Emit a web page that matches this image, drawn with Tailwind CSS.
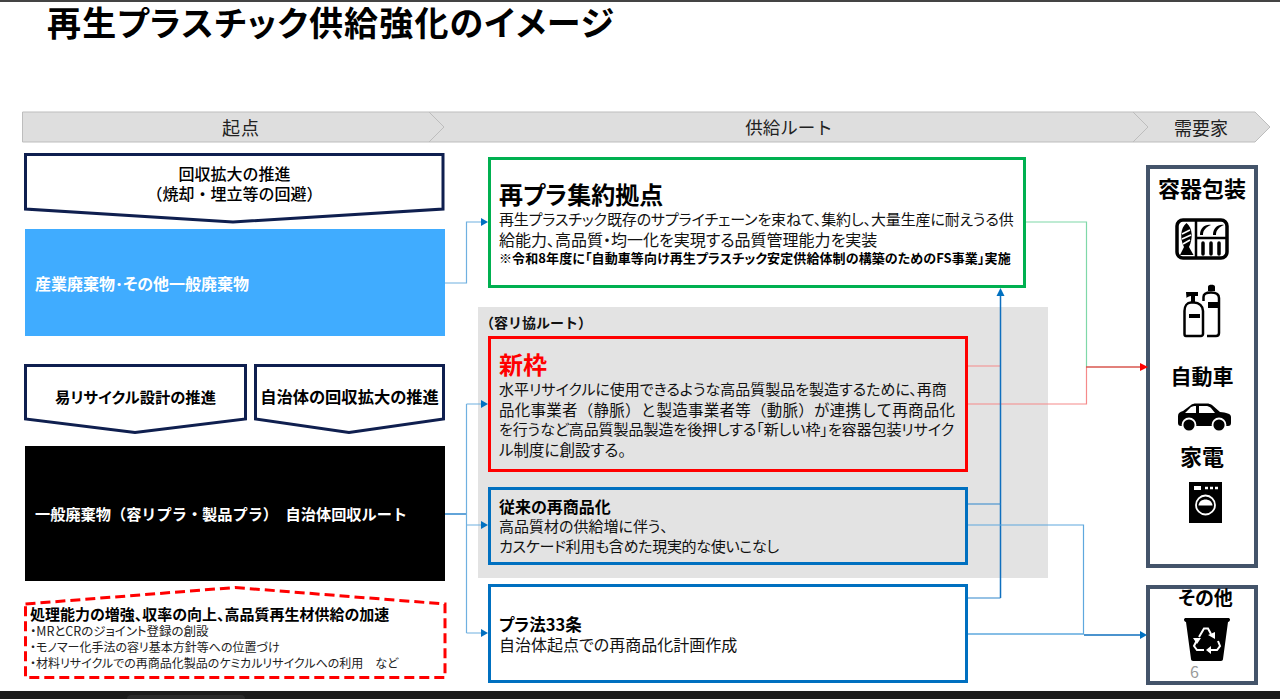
<!DOCTYPE html>
<html lang="ja">
<head>
<meta charset="utf-8">
<script src="https://cdn.jsdelivr.net/npm/@tailwindcss/browser@4"></script>
</head>
<body class="bg-white">
<div class="relative w-[1280px] h-[699px] overflow-hidden bg-white text-black font-['Noto_Sans_CJK_JP','Noto_Sans',sans-serif] [font-feature-settings:'palt']">
  <div class="h-[2px] bg-[#444]"></div>
  <h1 class="ml-[47px] h-[45px] text-[34px] leading-[40px] font-bold whitespace-nowrap tracking-[1.15px]">再生プラスチック供給強化のイメージ</h1>

  <!-- header chevrons -->
  <div class="relative ml-[22px] mt-[64px] w-[1262px] h-[32px] flex items-center text-[18px] pt-[1px] text-[#222] [font-feature-settings:normal]">
    <svg class="absolute left-0 top-0" width="1250" height="32" viewBox="0 0 1250 32">
      <path d="M0.5 1H407L422 16L407 31H0.5Z" fill="#dedede" stroke="#bdbdbd"/>
      <path d="M407 1H1111L1126 16L1111 31H407L422 16Z" fill="#dedede" stroke="#bdbdbd"/>
      <path d="M1111 1H1233L1248 16L1233 31H1111L1126 16Z" fill="#dedede" stroke="#bdbdbd"/>
    </svg>
    <span class="relative w-[438px] text-center tracking-[1px]">起点</span>
    <span class="relative w-[658px] text-center text-[17.500px]">供給ルート</span>
    <span class="relative w-[166px] text-center">需要家</span>
  </div>

  <!-- body -->
  <div class="flex ml-[24px] mt-[10px]">
    <!-- left -->
    <div class="w-[421px] flex flex-col">
      <div class="relative h-[71px] flex flex-col items-center pt-[10px] text-[16px] leading-[20px] font-medium text-center [font-feature-settings:normal]">
        <svg class="absolute inset-0" width="421" height="71" viewBox="0 0 421 71"><path d="M1.5 1.5H419V56L209 69L1.5 56Z" fill="#fff" stroke="#0f1f4f" stroke-width="3"/></svg>
        <span class="relative">回収拡大の推進</span>
        <span class="relative">（焼却・埋立等の回避）</span>
      </div>
      <div class="ml-px mt-[5px] h-[107px] bg-[#40acff] flex items-center pl-[10px] text-white text-[16px] font-bold whitespace-nowrap">産業廃棄物･その他一般廃棄物</div>
      <div class="mt-[28px] flex gap-[7px] h-[70px]">
        <div class="relative w-[223px] flex items-center justify-center pb-[5px] text-[15.3px] font-bold whitespace-nowrap">
          <svg class="absolute inset-0" width="223" height="70" viewBox="0 0 223 70"><path d="M1.5 1.5H221.500V55L111 68.500L1.5 55Z" fill="#fff" stroke="#0f1f4f" stroke-width="3"/></svg>
          <span class="relative">易リサイクル設計の推進</span>
        </div>
        <div class="relative w-[191px] flex items-center justify-center pb-[5px] text-[16.3px] font-bold whitespace-nowrap">
          <svg class="absolute inset-0" width="191" height="70" viewBox="0 0 191 70"><path d="M1.5 1.5H189.500V55L95 68.500L1.5 55Z" fill="#fff" stroke="#0f1f4f" stroke-width="3"/></svg>
          <span class="relative">自治体の回収拡大の推進</span>
        </div>
      </div>
      <div class="ml-px mt-[12px] h-[135px] bg-black flex items-center pl-[10px] text-white text-[15.200px] font-bold whitespace-nowrap [font-feature-settings:normal]">一般廃棄物（容リプラ・製品プラ）　自治体回収ルート</div>
      <div class="relative mt-[5px] h-[94px] pl-[6px] pt-[18px] whitespace-nowrap">
        <svg class="absolute inset-0" width="423" height="94" viewBox="0 0 423 94"><path d="M1.500 18L211 1.500L421 18V91.500H1.500Z" fill="#fff" stroke="#ff0000" stroke-width="3" stroke-dasharray="10 5"/></svg>
        <div class="relative text-[15px] leading-[19px] font-bold">処理能力の増強、収率の向上、高品質再生材供給の加速</div>
        <div class="relative text-[12px] leading-[16px] text-[#222]"><span class="text-[12.500px]">・MRとCRのジョイント登録の創設</span><br>・モノマー化手法の容リ基本方針等への位置づけ<br>・材料リサイクルでの再商品化製品のケミカルリサイクルへの利用　など</div>
      </div>
    </div>

    <!-- middle -->
    <div class="ml-[33px] w-[570px] flex flex-col whitespace-nowrap text-[15px] leading-[20px] text-[#111]">
      <div class="ml-[10px] mt-[4px] w-[538px] h-[131px] border-[3px] border-[#00b050] bg-white flex flex-col justify-center pl-[8px]">
        <div class="text-[24px] leading-[30px] font-bold text-black">再プラ集約拠点</div>
        <div class="tracking-[-0.13px]">再生プラスチック既存のサプライチェーンを束ねて、集約し、大量生産に耐えうる供</div>
        <div class="text-[16px]">給能力、高品質・均一化を実現する品質管理能力を実装</div>
        <div class="text-[13px] leading-[17px] tracking-[0.1px] font-bold text-black">※令和8年度に「自動車等向け再生プラスチック安定供給体制の構築のためのFS事業」実施</div>
      </div>
      <div class="mt-[19px] h-[271px] bg-[#e3e3e3] pl-[10px] pt-[7px]">
        <div class="h-[22px] -ml-[8px] text-[14px] leading-[16px] font-bold [font-feature-settings:normal]">（容リ協ルート）</div>
        <div class="w-[480px] h-[136px] border-[3px] border-[#ff0000] flex flex-col justify-center pl-[8px]">
          <div class="text-[24px] leading-[30px] font-bold text-[#ff0000]">新枠</div>
          <div>水平リサイクルに使用できるような高品質製品を製造するために、再商</div>
          <div class="text-[15.500px] tracking-[0.25px] [font-feature-settings:normal]">品化事業者（静脈）と製造事業者等（動脈）が連携して再商品化</div>
          <div class="tracking-[-0.05px]">を行うなど高品質製品製造を後押しする「新しい枠」を容器包装リサイク</div>
          <div class="text-[15.500px]">ル制度に創設する。</div>
        </div>
        <div class="mt-[15px] w-[480px] h-[78px] border-[3px] border-[#0070c0] flex flex-col justify-center pl-[8px] pb-[1px]">
          <div class="text-[16px] font-bold text-black">従来の再商品化</div>
          <div>高品質材の供給増に伴う、</div>
          <div class="tracking-[-0.3px]">カスケード利用も含めた現実的な使いこなし</div>
        </div>
      </div>
      <div class="ml-[10px] mt-[6px] w-[480px] h-[99px] border-[3px] border-[#0070c0] bg-white flex flex-col justify-center pl-[8px]">
        <div class="text-[16.500px] font-bold text-black">プラ法33条</div>
        <div class="text-[16px]">自治体起点での再商品化計画作成</div>
      </div>
    </div>

    <!-- right -->
    <div class="ml-[98px] w-[112px] flex flex-col font-bold text-center">
      <div class="mt-[12px] h-[403px] border-[4px] border-[#44546a] flex flex-col items-center">
        <div class="mt-[4px] h-[28px] text-[22px] leading-[28px] whitespace-nowrap">容器包装</div>
        <svg class="mt-[17px] mr-[1px]" width="54" height="42" viewBox="0 0 54 42">
          <rect x="2" y="2" width="50" height="38" rx="6" fill="#fff" stroke="#000" stroke-width="3.500"/>
          <path d="M21 2V40M21 20H52" stroke="#000" stroke-width="2.500"/>
          <path d="M11.500 5C18 10 18 21 14 29L18.500 37H5L9 29C5 21 5 10 11.500 5Z" fill="#000"/>
          <path d="M7 16L15 12M7 21L16 17M8 26L15 22" stroke="#fff" stroke-width="1.600"/>
          <path d="M25 17C25 10 30 6 36 7C31 9 28 12 28 17ZM38 17C38 10 43 6 49 7C44 9 41 12 41 17Z" fill="#000"/>
          <path d="M28 25V36M36 25V36M44 25V36" stroke="#000" stroke-width="3.500" stroke-linecap="round"/>
        </svg>
        <svg class="mt-[23px] mr-[1px]" width="38" height="55" viewBox="0 0 38 55">
          <path d="M25 3.500C25 1 32 1 32 3.500V8H25Z" fill="#000"/>
          <path d="M20.500 18V14C20.500 11 23 9.500 28 9.500C33 9.500 36 11 36 15V50C36 52 35 53 33 53H24" fill="none" stroke="#000" stroke-width="2.500"/>
          <path d="M25 19H36V25H25Z" fill="#000"/>
          <path d="M3 9H15V13H12V19H8V13C6 13 4.500 14 3.500 15Z" fill="#000"/>
          <path d="M8 19.500H11C16 19.500 20 23 20 28V51C20 52 19 53 18 53H3C2 53 1.500 52 1.500 51V28C1.500 23 4 19.500 8 19.500Z" fill="#fff" stroke="#000" stroke-width="2.500"/>
          <rect x="6" y="31" width="11" height="4" fill="#000"/>
        </svg>
        <div class="mt-[19px] h-[36px] text-[21px] leading-[36px] whitespace-nowrap">自動車</div>
        <svg class="mt-[10px] ml-[4px]" width="55" height="30" viewBox="0 0 55 30">
          <path d="M1 20V13C1 10 3 9 6 8L14 2C15 1 17 0.500 19 0.500H30C32 0.500 33 1 35 2L43 9C49 9.500 54 10.500 54 14V20C54 22 53 23 51 23H4C2 23 1 22 1 20Z" fill="#000"/>
          <path d="M8 10L14 4C15 3.500 17 3 19 3V10ZM22 3H30C31 3 33 4 34 5L38 10H22Z" fill="#fff"/>
          <circle cx="12" cy="22" r="6.500" fill="#000" stroke="#fff" stroke-width="1.800"/>
          <circle cx="42" cy="22" r="6.500" fill="#000" stroke="#fff" stroke-width="1.800"/>
        </svg>
        <div class="mt-[4px] h-[36px] text-[22px] leading-[36px] whitespace-nowrap">家電</div>
        <svg class="mt-[9px] ml-[7px]" width="33" height="41" viewBox="0 0 33 41">
          <rect width="33" height="41" fill="#000"/>
          <rect x="5" y="4" width="7" height="4" fill="#fff"/>
          <path d="M16 6H19M21 6H24M26 6H29" stroke="#fff" stroke-width="2.500"/>
          <circle cx="16.500" cy="23" r="9.500" fill="none" stroke="#fff" stroke-width="1.800"/>
          <path d="M9.500 23.500C10 15.500 23 15.500 23.500 23.500Z" fill="#fff"/>
        </svg>
      </div>
      <div class="relative mt-[17px] h-[100px] border-[4px] border-[#44546a] flex flex-col items-center">
        <div class="ml-[7px] -mt-[2px] h-[20px] text-[19px] leading-[20px] whitespace-nowrap">その他</div>
        <svg class="mt-[11px] ml-[9px]" width="48" height="43" viewBox="0 0 48 43">
          <path d="M1 1.500C1 0.500 2 0 3 0H45C46 0 47 0.500 47 1.500C47 3 46 4 45 4L40 41C40 42 39 43 38 43H10C9 43 8 42 8 41L3 4C2 4 1 3 1 1.500Z" fill="#000"/>
          <path d="M16 19L21 10.500H25L28 16M35 23L37 28L34 32H28M21 32H14L11 28L14 22" fill="none" stroke="#fff" stroke-width="2"/>
          <path d="M25 17L32 14L32 21ZM28 28V36L23 32ZM10 20L18 20L14 26Z" fill="#fff"/>
        </svg>
        <span class="absolute left-[40px] top-[73px] text-[16px] leading-[18px] font-normal text-[#999]">6</span>
      </div>
    </div>
  </div>

  <!-- connectors -->
  <svg class="absolute inset-0 pointer-events-none" width="1280" height="699" viewBox="0 0 1280 699" fill="none">
    <path d="M445 283H466.500V222H482" stroke="#6fb0e0" stroke-width="1.200"/>
    <path d="M445 514H466.500" stroke="#2e86cc" stroke-width="1.500"/>
    <path d="M466.500 404V633M466.500 404H482M466.500 525H482M466.500 633H482" stroke="#6fb0e0" stroke-width="1.200"/>
    <path d="M1026 222H1086.500V367" stroke="#7fd8a8" stroke-width="1.200"/>
    <path d="M968 366H1000M968 404H1086.500V367" stroke="#f58a8a" stroke-width="1.200"/>
    <path d="M1086 367H1142" stroke="#d8574f" stroke-width="1.300"/>
    <path d="M1000.500 296V598" stroke="#0f6fbe" stroke-width="1.500"/>
    <path d="M968 504H1000.500M968 598H1000.500" stroke="#2e86cc" stroke-width="1.200"/>
    <path d="M968 525H1083.500V634" stroke="#5ea8de" stroke-width="1.200"/>
    <path d="M968 634H1084" stroke="#5ea8de" stroke-width="1.500"/>
    <path d="M1084 635H1142" stroke="#0f6fbe" stroke-width="1.500"/>
    <path d="M488 222L481 218V226ZM488 404L481 400V408ZM488 525L481 521V529ZM488 633L481 629V637ZM1147 635L1140 631V639ZM1000.500 288L996.500 296H1004.500Z" fill="#0070c0"/>
    <path d="M1148 367L1140 363V371Z" fill="#ff0000"/>
  </svg>

  <!-- taskbar strip -->
  <div class="absolute left-0 right-0 bottom-0 h-[8px] bg-[#1c1c1c]">
    <div class="absolute left-[127px] top-[4px] w-[118px] h-[4px] rounded-t-[4px] bg-[#2b2b2b]"></div>
  </div>
</div>
</body>
</html>
